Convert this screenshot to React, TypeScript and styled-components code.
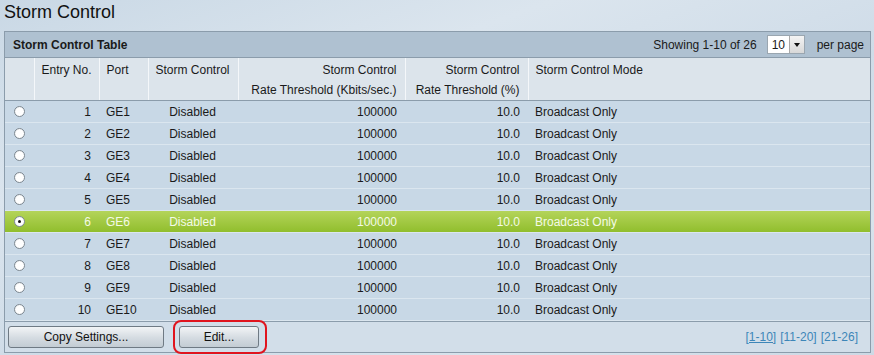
import React from 'react';
import styled, {createGlobalStyle} from 'styled-components';

const GlobalStyle = createGlobalStyle`
  html, body {
    margin: 0;
    padding: 0;
  }
  body {
    width: 874px;
    height: 355px;
    overflow: hidden;
    font-family: "Liberation Sans", Arial, sans-serif;
    font-size: 12px;
    color: #1a1a1a;
    background: linear-gradient(160deg, #c9d8e5 0%, #dbe5ee 30%, #cfdce8 55%, #d8e3ec 80%, #cdd9e5 100%);
  }
`;

const Page = styled.div`
  padding: 1px 4px 0 4px;
`;

const Title = styled.h1`
  margin: 0;
  height: 30px;
  font-size: 18px;
  font-weight: normal;
  line-height: 22px;
  color: #111;
`;

const Panel = styled.div`
  width: 865px;
  border: 1px solid #8b9cab;
  background: #c8d8e6;
`;

const TitleBar = styled.div`
  height: 25px;
  display: flex;
  align-items: center;
  justify-content: space-between;
  padding: 0 8px;
  background: #afc1d1;
  border-bottom: 1px solid #8b9cab;
`;

const TableName = styled.span`
  font-weight: bold;
  color: #1a1a1a;
`;

const Pager = styled.div`
  display: flex;
  align-items: center;
  gap: 8px;
  margin-right: -2px;
`;

const Select = styled.div`
  display: flex;
  align-items: center;
  height: 19px;
  width: 38px;
  background: #fff;
  border: 1px solid #9aa6b0;
  padding-left: 4px;
  box-sizing: border-box;
  justify-content: space-between;
  margin: 0 4px 0 2px;
`;

const Arrow = styled.span`
  width: 14px;
  height: 17px;
  background: linear-gradient(#f4f4f4, #d8d8d8);
  border-left: 1px solid #a8a8a8;
  display: flex;
  align-items: center;
  justify-content: center;
  &::after {
    content: '';
    border-left: 3.5px solid transparent;
    border-right: 3.5px solid transparent;
    border-top: 4px solid #111;
  }
`;

const Table = styled.table`
  width: 100%;
  border-collapse: collapse;
  table-layout: fixed;
`;

const Th = styled.th<{align?: string}>`
  background: #dce4eb;
  font-weight: normal;
  text-align: ${p => p.align || 'left'};
  vertical-align: top;
  padding: 2px 8px 0 7px;
  height: 38px;
  line-height: 20px;
  white-space: nowrap;
  border-left: 1px solid #f4f7fa;
  border-bottom: 1px solid #8b9cab;
  &:first-child {
    border-left: none;
  }
`;

const Row = styled.tr<{selected?: boolean}>`
  background: ${p => p.selected ? 'linear-gradient(#b4d45a, #8fbd2b)' : '#c8d8e6'};
  color: ${p => p.selected ? '#f4fae6' : '#1a1a1a'};
`;

const Td = styled.td<{align?: string}>`
  height: 21px;
  padding: 0 8px 0 7px;
  text-align: ${p => p.align || 'left'};
  border-bottom: 1px solid #dbe6ef;
  white-space: nowrap;
`;

const Radio = styled.span<{checked?: boolean}>`
  display: inline-block;
  width: 11px;
  height: 11px;
  border-radius: 50%;
  box-sizing: border-box;
  border: 1px solid #7c8790;
  background: radial-gradient(circle at 60% 60%, #ffffff 55%, #dfe3e6 100%);
  margin-left: 2px;
  margin-top: 2px;
  position: relative;
  &::after {
    content: '';
    display: ${p => p.checked ? 'block' : 'none'};
    position: absolute;
    left: 3px;
    top: 3px;
    width: 3px;
    height: 3px;
    border-radius: 50%;
    background: #111;
  }
`;

const Footer = styled.div`
  height: 30px;
  display: flex;
  align-items: center;
  padding: 0 3px;
  background: #d2dee9;
  border-top: 1px solid #8b9cab;
`;

const Button = styled.button`
  height: 22px;
  font-family: "Liberation Sans", Arial, sans-serif;
  font-size: 12px;
  color: #111;
  border: 1px solid #6f7a84;
  border-radius: 3px;
  background: linear-gradient(#f2f4f6, #d4dbe1 55%, #c3ccd4);
  padding: 0;
`;

const CopyButton = styled(Button)`
  width: 156px;
`;

const Highlight = styled.div`
  margin-left: 9px;
  padding: 4px 6px 4px 4px;
  border: 2px solid #e0141e;
  border-radius: 8px;
  display: flex;
`;

const EditButton = styled(Button)`
  width: 80px;
`;

const Links = styled.div`
  margin-left: auto;
  margin-right: 9px;
  display: flex;
  gap: 4px;
`;

const PageLink = styled.a<{current?: boolean}>`
  color: #3d86b8;
  text-decoration: ${p => p.current ? 'underline' : 'none'};
`;

const rows = Array.from({length: 10}, (_, i) => i + 1);

export default function App() {
  return (
    <Page>
      <GlobalStyle/>
      <Title>Storm Control</Title>
      <Panel>
        <TitleBar>
          <TableName>Storm Control Table</TableName>
          <Pager>
            <span>Showing 1-10 of 26</span>
            <Select>10<Arrow/></Select>
            <span>per page</span>
          </Pager>
        </TitleBar>
        <Table>
          <colgroup>
            <col style={{width: 29}}/>
            <col style={{width: 65}}/>
            <col style={{width: 49}}/>
            <col style={{width: 90}}/>
            <col style={{width: 167}}/>
            <col style={{width: 123}}/>
            <col/>
          </colgroup>
          <thead>
            <tr>
              <Th/>
              <Th align="right">Entry No.</Th>
              <Th>Port</Th>
              <Th align="center">Storm Control</Th>
              <Th align="right">Storm Control<br/>Rate Threshold (Kbits/sec.)</Th>
              <Th align="right">Storm Control<br/>Rate Threshold (%)</Th>
              <Th>Storm Control Mode</Th>
            </tr>
          </thead>
          <tbody>
            {rows.map(n => (
              <Row key={n} selected={n === 6}>
                <Td><Radio checked={n === 6}/></Td>
                <Td align="right">{n}</Td>
                <Td>GE{n}</Td>
                <Td align="center">Disabled</Td>
                <Td align="right">100000</Td>
                <Td align="right">10.0</Td>
                <Td>Broadcast Only</Td>
              </Row>
            ))}
          </tbody>
        </Table>
        <Footer>
          <CopyButton>Copy Settings...</CopyButton>
          <Highlight>
            <EditButton>Edit...</EditButton>
          </Highlight>
          <Links>
            <PageLink current>[1-10]</PageLink>
            <PageLink>[11-20]</PageLink>
            <PageLink>[21-26]</PageLink>
          </Links>
        </Footer>
      </Panel>
    </Page>
  );
}
